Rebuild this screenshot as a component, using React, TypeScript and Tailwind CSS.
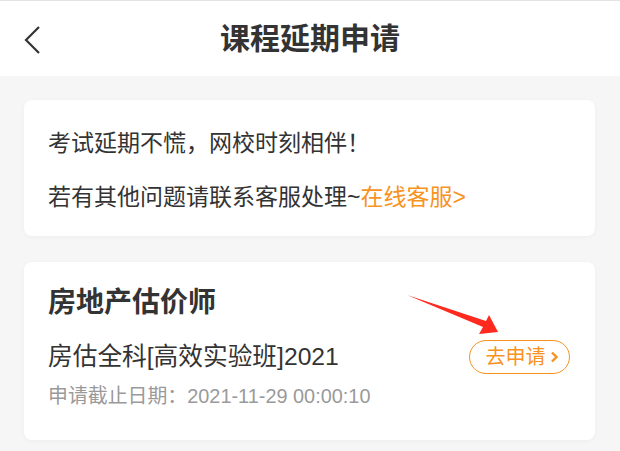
const font = { fontFamily: '"Liberation Sans", "Noto Sans CJK SC", sans-serif' }

export default function App() {
  return (
    <div className="relative w-[620px] h-[451px] bg-[#f6f6f6] overflow-hidden" style={font}>
      {/* Header */}
      <header className="relative h-[76px] bg-white border-t border-[#e3e3e3] flex items-center justify-center">
        <button className="absolute left-[23px] top-[24px] w-[20px] h-[30px] flex items-center">
          <svg width="18" height="30" viewBox="0 0 18 30" fill="none">
            <polyline points="16,2 3,15 16,28" stroke="#333" strokeWidth="2.2" strokeLinejoin="miter" />
          </svg>
        </button>
        <h1 className="text-[30px] font-bold text-[#333] leading-none mt-[1px]">课程延期申请</h1>
      </header>

      <main className="pl-[24px] pr-[25px] pt-[24px] flex flex-col gap-[26px]">
        {/* Notice card */}
        <section className="bg-white rounded-lg shadow-[0_1px_4px_rgba(0,0,0,0.04)] pl-[24px] pt-[26px] pb-[22px] flex flex-col gap-[20px] text-[23px] text-[#333] leading-[34px]">
          <p>考试延期不慌，网校时刻相伴！</p>
          <p>
            若有其他问题请联系客服处理~<span className="text-[#f7931e]">在线客服&gt;</span>
          </p>
        </section>

        {/* Course card */}
        <section className="relative bg-white rounded-lg shadow-[0_1px_4px_rgba(0,0,0,0.04)] pl-[24px] pr-[25px] pt-[23px] pb-[31px] flex flex-col">
          <h2 className="text-[28px] font-bold text-[#333] leading-[36px]">房地产估价师</h2>
          <div className="mt-[19px] flex items-center justify-between">
            <span className="text-[24.7px] text-[#333] leading-[34px]">房估全科[高效实验班]2021</span>
            <button className="h-[34px] w-[101px] rounded-full border border-[#f7931e] text-[#f7931e] text-[20px] flex items-center justify-center gap-[4px] pl-[4px]">
              去申请
              <svg width="8" height="12" viewBox="0 0 8 12" fill="none">
                <polyline points="2,1.5 6.5,6 2,10.5" stroke="#f7931e" strokeWidth="2.4" />
              </svg>
            </button>
          </div>
          <p className="mt-[9px] text-[19.9px] text-[#9a9a9a] leading-[26px]">申请截止日期：2021-11-29 00:00:10</p>
        </section>
      </main>

      {/* Red annotation arrow */}
      <svg className="absolute left-[400px] top-[288px]" width="110" height="55" viewBox="400 288 110 55">
        <polygon points="407,295 486,321 489,315 498,332 479,334 483,327" fill="#ff2a1f" />
      </svg>
    </div>
  )
}
